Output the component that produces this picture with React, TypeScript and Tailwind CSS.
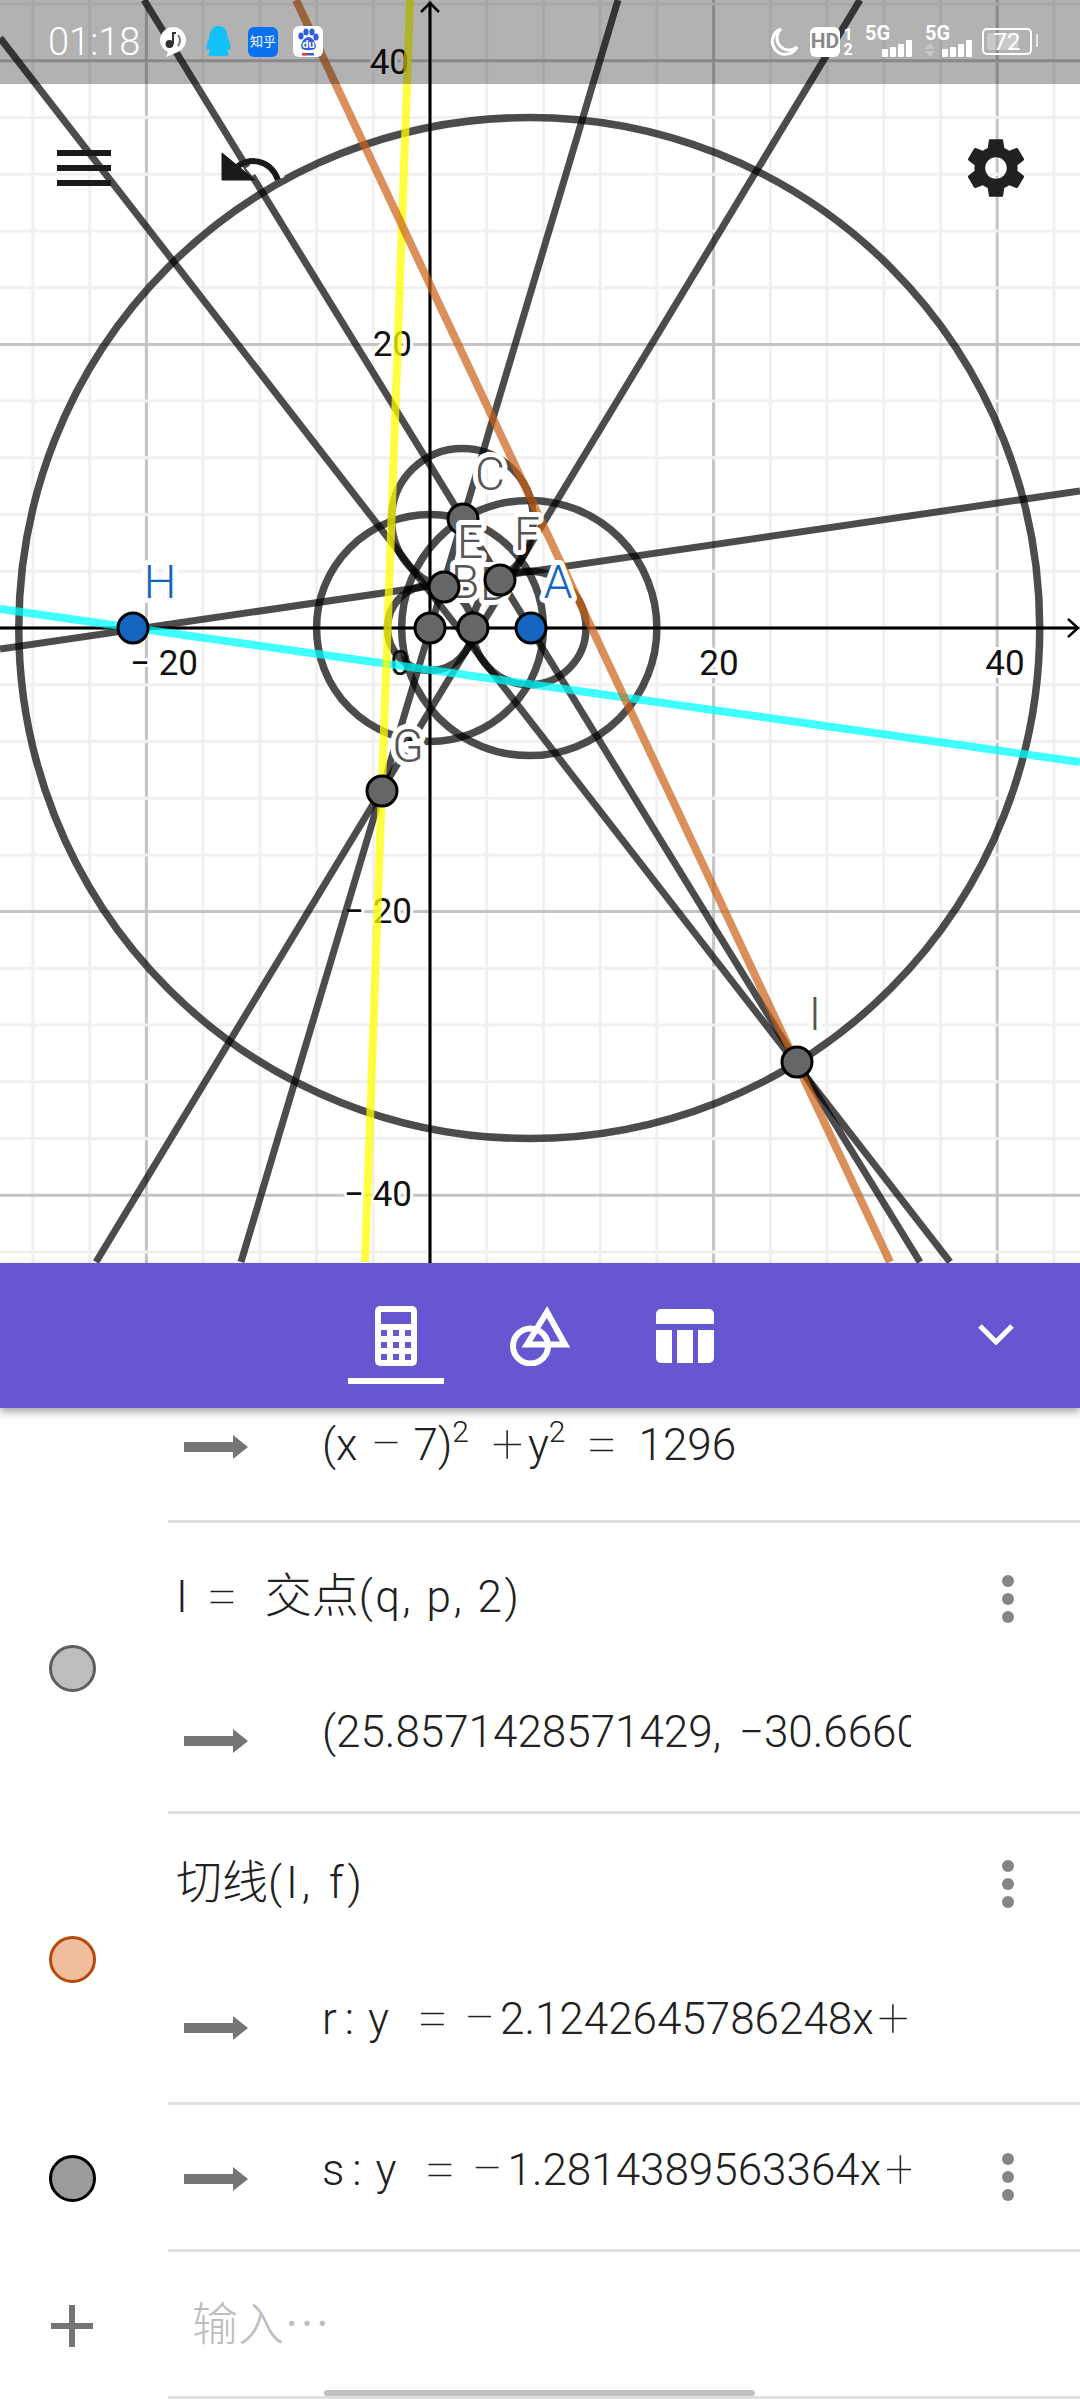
import type { ReactNode } from "react";

const UNIT = 14.18;
const OX = 430;
const OY = 628;
const CANVAS_H = 1263;

const px = (v: number) => OX + v * UNIT;
const py = (v: number) => OY - v * UNIT;

const gridXs = Array.from({ length: 20 }, (_, i) => i * 4 - 32);
const gridYs = Array.from({ length: 24 }, (_, i) => i * 4 - 48);

const circles = [
  { x: 7, y: 0, r: 36 },
  { x: 7, y: 0, r: 9 },
  { x: 0, y: 0, r: 8 },
  { x: 2.2857, y: 7.667, r: 5 },
  { x: 0, y: 0, r: 3 },
  { x: 7, y: 0, r: 4 },
];

const darkLines = [
  [0, 649, 1080, 491],
  [0, 38, 950, 1262],
  [144, 0, 920, 1262],
  [618, 0, 241, 1262],
  [860, 0, 96, 1262],
];

const labels = [
  { t: "D", x: 495, y: 600, c: "#555555" },
  { t: "C", x: 490, y: 490, c: "#555555" },
  { t: "B", x: 465, y: 598, c: "#555555" },
  { t: "F", x: 527, y: 550, c: "#555555" },
  { t: "A", x: 558, y: 598, c: "#1565c0" },
  { t: "G", x: 408, y: 762, c: "#555555" },
  { t: "H", x: 160, y: 598, c: "#1565c0" },
  { t: "I", x: 815, y: 1030, c: "#555555" },
];

const points = [
  { x: 430, y: 628, c: "#666666" },
  { x: 473, y: 628, c: "#666666" },
  { x: 444, y: 587, c: "#666666" },
  { x: 500, y: 580, c: "#666666" },
  { x: 463, y: 519, c: "#666666" },
  { x: 382, y: 791, c: "#666666" },
  { x: 797, y: 1062, c: "#666666" },
  { x: 531, y: 628, c: "#1565c0" },
  { x: 133, y: 628, c: "#1565c0" },
];

const axisLabels = [
  { t: "40", x: 409, y: 74, a: "end" },
  { t: "20", x: 412, y: 356, a: "end" },
  { t: "− 20", x: 412, y: 923, a: "end" },
  { t: "− 40", x: 412, y: 1206, a: "end" },
  { t: "− 20", x: 164, y: 675, a: "middle" },
  { t: "20", x: 719, y: 675, a: "middle" },
  { t: "40", x: 1005, y: 675, a: "middle" },
  { t: "0", x: 400, y: 675, a: "middle" },
];

function PointLabel({ t, x, y, c }: { t: string; x: number; y: number; c: string }) {
  return (
    <text
      x={x}
      y={y}
      textAnchor="middle"
      fontSize="46"
      fontWeight="300"
      fill={c}
      stroke="#ffffff"
      strokeWidth="10"
      paintOrder="stroke"
      strokeLinejoin="round"
    >
      {t}
    </text>
  );
}

function Plot() {
  return (
    <svg width="1080" height={CANVAS_H} className="absolute inset-0">
      {gridXs.map((g) => (
        <line key={g} x1={px(g)} x2={px(g)} y1="0" y2={CANVAS_H} stroke={g % 20 === 0 ? "#c4c4c4" : "#f0f0f0"} strokeWidth="3" />
      ))}
      {gridYs.map((g) => (
        <line key={g} y1={py(g)} y2={py(g)} x1="0" x2="1080" stroke={g % 20 === 0 ? "#c4c4c4" : "#f0f0f0"} strokeWidth="3" />
      ))}
      <line x1={OX} x2={OX} y1="2" y2={CANVAS_H} stroke="#000000" strokeWidth="3" />
      <line x1="0" x2="1078" y1={OY} y2={OY} stroke="#000000" strokeWidth="3" />
      <path d="M421 12 L430 3 L439 12" fill="none" stroke="#000000" strokeWidth="2.5" />
      <path d="M1068 619 L1078 628 L1068 637" fill="none" stroke="#000000" strokeWidth="2.5" />

      {axisLabels.map((l) => (
        <text
          key={l.t + l.x + l.y}
          x={l.x}
          y={l.y}
          textAnchor={l.a as "end" | "middle"}
          fontSize="35"
          fill="#111111"
          stroke="#ffffff"
          strokeWidth="6"
          paintOrder="stroke"
          strokeLinejoin="round"
        >
          {l.t}
        </text>
      ))}

      <g fill="none" stroke="#000000" strokeOpacity="0.7" strokeWidth="7.5">
        {circles.map((c) => (
          <circle key={`${c.x}-${c.r}`} cx={px(c.x)} cy={py(c.y)} r={c.r * UNIT} />
        ))}
      </g>
      <g stroke="#000000" strokeOpacity="0.7" strokeWidth="7">
        {darkLines.map((l) => (
          <line key={l.join()} x1={l[0]} y1={l[1]} x2={l[2]} y2={l[3]} />
        ))}
      </g>
      <line x1="0" y1="609" x2="1080" y2="762" stroke="#00ffff" strokeOpacity="0.75" strokeWidth="8" />
      <line x1="410" y1="0" x2="365" y2="1262" stroke="#ffff00" strokeOpacity="0.75" strokeWidth="8" />
      <line x1="296" y1="0" x2="890" y2="1262" stroke="#cc5f14" strokeOpacity="0.7" strokeWidth="8" />

      {labels.map((l) => (
        <PointLabel key={l.t} {...l} />
      ))}
      {points.map((p) => (
        <circle key={`${p.x}-${p.y}`} cx={p.x} cy={p.y} r="15" fill={p.c} stroke="#000000" strokeWidth="3" />
      ))}
      {/* E sits on top of point C in the reference */}
      <PointLabel t="E" x={470} y={558} c="#555555" />
    </svg>
  );
}

function SignalBars({ arrows }: { arrows?: boolean }) {
  return (
    <div className="relative w-[47px] h-[30px]">
      <span className="absolute left-0 top-[-4px] text-[20px] leading-[20px] font-bold text-white">5G</span>
      {arrows && (
        <svg width="10" height="14" className="absolute left-0 bottom-0" fill="#c8c8c8">
          <path d="M5 0 L10 6 H0 Z M0 8 H10 L5 14 Z" />
        </svg>
      )}
      <div className="absolute right-0 bottom-0 flex items-end gap-[2px]">
        <span className="w-[6px] h-[8px] rounded-[1px] bg-white" />
        <span className="w-[6px] h-[10px] rounded-[1px] bg-white" />
        <span className="w-[6px] h-[13px] rounded-[1px] bg-white" />
        <span className="w-[6px] h-[17px] rounded-[1px] bg-white" />
      </div>
    </div>
  );
}

function StatusBar() {
  return (
    <div className="absolute top-0 left-0 w-full h-[84px] bg-black/30 flex items-center pl-[48px] pr-[48px] pb-[1px]">
      <span className="text-[38px] leading-none font-light text-white w-[111px]">01:18</span>
      <svg width="28" height="32" viewBox="0 0 28 32" className="mt-[1px]">
        <path d="M14 1 a13 13 0 0 1 5 25 L7 31 L9 26 A13 13 0 0 1 14 1 Z" fill="#ffffff" />
        <circle cx="10.5" cy="18" r="4" fill="#333333" />
        <path d="M14 18 V7 L17 7" fill="none" stroke="#333333" strokeWidth="2" />
        <path d="M19 9 Q23 14 19 20" fill="none" stroke="#777777" strokeWidth="2" />
      </svg>
      <svg width="27" height="31" viewBox="0 0 26 31" className="ml-[18px]">
        <path d="M13 0 C20 0 22 6 22 11 C25 17 26 22 24 24 L22 23 C22 27 24 29 22 30 H4 C2 29 4 27 4 23 L2 24 C0 22 1 17 4 11 C4 6 6 0 13 0 Z" fill="#12c2f7" />
      </svg>
      <div className="ml-[16px] w-[30px] h-[30px] rounded-[6px] bg-[#0a72f0] flex items-center justify-center text-[13px] leading-none text-white whitespace-nowrap">
        知乎
      </div>
      <svg width="30" height="31" viewBox="0 0 30 31" className="ml-[15px]">
        <rect width="30" height="31" rx="6" fill="#ffffff" />
        <g fill="#2d5de0">
          <ellipse cx="8" cy="10" rx="2.6" ry="3.6" />
          <ellipse cx="13" cy="6" rx="2.6" ry="3.6" />
          <ellipse cx="19" cy="6" rx="2.6" ry="3.6" />
          <ellipse cx="23" cy="11" rx="2.6" ry="3.6" />
          <path d="M15.5 11 C20 11 24 18 22.5 22 C21 25 10 25 8.5 22 C7 18 11 11 15.5 11 Z" />
        </g>
        <text x="15.5" y="22" textAnchor="middle" fontSize="11" fontWeight="700" fill="#ffffff">du</text>
        <rect x="9" y="27" width="6" height="2.5" fill="#e53935" />
        <rect x="15" y="27" width="6" height="2.5" fill="#2d5de0" />
      </svg>

      <svg width="28" height="28" viewBox="0 0 28 28" className="ml-auto">
        <path d="M11 1 A13 13 0 1 0 27 19 A12 12 0 0 1 11 1 Z" fill="none" stroke="#ffffff" strokeWidth="3" />
      </svg>
      <div className="ml-[12px] w-[30px] h-[30px] rounded-[6px] bg-white flex items-center justify-center text-[21px] leading-none font-bold text-[#8a8a8a]">
        HD
      </div>
      <div className="ml-[2px] w-[12px] flex flex-col items-center text-[16px] leading-[15px] font-bold text-white">
        <span>1</span>
        <span>2</span>
      </div>
      <div className="ml-[11px]">
        <SignalBars />
      </div>
      <div className="ml-[13px]">
        <SignalBars arrows />
      </div>
      <div className="ml-[10px] relative w-[50px] h-[27px] rounded-[5px] border-[2.5px] border-white flex items-center justify-center">
        <span className="absolute left-[3px] top-[3px] bottom-[3px] w-[31px] rounded-[2px] bg-white/30" />
        <span className="relative text-[24px] leading-none text-white">72</span>
        <span className="absolute right-[-8px] top-[4px] w-[2px] h-[13px] bg-white/70" />
      </div>
    </div>
  );
}

function GraphicsPanel() {
  return (
    <section className="relative h-[1263px] w-full overflow-hidden bg-white shrink-0">
      <Plot />
      <StatusBar />
      <div className="absolute left-[57px] top-[150px] w-[54px] flex flex-col gap-[9px]">
        <span className="h-[6px] bg-[#1a1a1a]" />
        <span className="h-[6px] bg-[#1a1a1a]" />
        <span className="h-[6px] bg-[#1a1a1a]" />
      </div>
      <svg width="64" height="30" viewBox="0 0 64 30" className="absolute left-[221px] top-[152px]">
        <path d="M28 20 A20 20 0 0 1 59 27" fill="none" stroke="#ffffff" strokeWidth="10" />
        <path d="M1 1 V28 H34 Z" fill="#1a1a1a" stroke="#1a1a1a" strokeWidth="1" />
        <path d="M15 16 C26 5 49 6 57 28" fill="none" stroke="#1a1a1a" strokeWidth="6" />
      </svg>
      <svg width="72" height="72" viewBox="0 0 24 24" className="absolute left-[960px] top-[132px]" fill="#212121">
        <path d="M19.14 12.94c.04-.3.06-.61.06-.94 0-.32-.02-.64-.07-.94l2.03-1.58c.18-.14.23-.41.12-.61l-1.92-3.32c-.12-.22-.37-.29-.59-.22l-2.39.96c-.5-.38-1.03-.7-1.62-.94l-.36-2.54c-.04-.24-.24-.41-.48-.41h-3.84c-.24 0-.43.17-.47.41l-.36 2.54c-.59.24-1.13.57-1.62.94l-2.39-.96c-.22-.08-.47 0-.59.22L2.74 8.87c-.12.21-.08.47.12.61l2.03 1.58c-.05.3-.09.63-.09.94s.02.64.07.94l-2.03 1.58c-.18.14-.23.41-.12.61l1.92 3.32c.12.22.37.29.59.22l2.39-.96c.5.38 1.03.7 1.62.94l.36 2.54c.05.24.24.41.48.41h3.84c.24 0 .44-.17.47-.41l.36-2.54c.59-.24 1.13-.56 1.62-.94l2.39.96c.22.08.47 0 .59-.22l1.92-3.32c.12-.22.07-.47-.12-.61l-2.01-1.58zM12 15.6c-1.98 0-3.6-1.62-3.6-3.6s1.62-3.6 3.6-3.6 3.6 1.62 3.6 3.6-1.62 3.6-3.6 3.6z" />
      </svg>
    </section>
  );
}

function Toolbar() {
  return (
    <div className="relative z-10 flex items-start h-[145px] shrink-0 pt-[43px] pl-[324px] pr-[66px] bg-[#6557d2] shadow-[0_4px_8px_rgba(0,0,0,0.35)]">
      <button className="w-[144px] flex flex-col items-center">
        <svg width="42" height="60" viewBox="0 0 42 60">
          <rect width="42" height="60" rx="5" fill="#ffffff" />
          <g fill="#6557d2">
            <rect x="6" y="6" width="30" height="12" />
            {[24, 36, 48].map((y) =>
              [6, 18, 30].map((x) => <rect key={`${x}-${y}`} x={x} y={y} width="6" height="6" />),
            )}
          </g>
        </svg>
        <span className="mt-[12px] w-[96px] h-[6px] bg-white" />
      </button>
      <button className="w-[144px] flex flex-col items-center">
        <svg width="60" height="60" viewBox="0 0 60 60" fill="none" stroke="#ffffff">
          <circle cx="20.5" cy="40" r="17.5" strokeWidth="6" />
          <path d="M37 6 L17 38.5 H55 Z" strokeWidth="6" />
        </svg>
      </button>
      <button className="w-[144px] flex flex-col items-center pt-[3px] pl-[2px]">
        <svg width="58" height="54" viewBox="0 0 58 54" fill="#ffffff">
          <path d="M5 0 H53 A5 5 0 0 1 58 5 V15 H0 V5 A5 5 0 0 1 5 0 Z" />
          <path d="M0 21 H16 V54 H5 A5 5 0 0 1 0 49 Z" />
          <rect x="21" y="21" width="16" height="33" />
          <path d="M42 21 H58 V49 A5 5 0 0 1 53 54 H42 Z" />
        </svg>
      </button>
      <svg width="36" height="21" viewBox="0 0 36 21" className="ml-auto mt-[18px]" fill="none" stroke="#ffffff" strokeWidth="5">
        <path d="M2 2 L18 18 L34 2" />
      </svg>
    </div>
  );
}

function Arrow() {
  return (
    <svg width="64" height="24" viewBox="0 0 64 24" className="shrink-0 mt-[4px]" fill="#757575">
      <path d="M0 7 H49 V0 L64 12 L49 24 V17 H0 Z" />
    </svg>
  );
}

function Dots() {
  return (
    <div className="ml-auto mr-[66px] flex flex-col gap-[6px] shrink-0">
      <span className="w-[12px] h-[12px] rounded-full bg-[#858585]" />
      <span className="w-[12px] h-[12px] rounded-full bg-[#858585]" />
      <span className="w-[12px] h-[12px] rounded-full bg-[#858585]" />
    </div>
  );
}

// math operators in the reference are wider and thinner than the text font
function Op({ children, w = "w-[33px]" }: { children: ReactNode; w?: string }) {
  return (
    <span className={`inline-block ${w} text-center text-[56px] leading-[48px] font-thin relative top-[3px]`}>{children}</span>
  );
}

function Output({ children, dots, offset = "mb-[6px]" }: { children: ReactNode; dots?: boolean; offset?: string }) {
  return (
    <div className="flex items-center h-full pl-[16px]">
      <Arrow />
      <div className={`ml-[74px] w-[589px] h-[68px] overflow-hidden whitespace-nowrap text-[44px] leading-[60px] font-light text-[#212121] ${offset}`}>
        {children}
      </div>
      {dots && <Dots />}
    </div>
  );
}

function Marble({ fill, border }: { fill: string; border: string }) {
  return <span className={`w-[47px] h-[47px] rounded-full border-[3px] ${fill} ${border}`} />;
}

function Row({ marble, className, children }: { marble?: ReactNode; className: string; children: ReactNode }) {
  return (
    <div className={`flex ${className}`}>
      <div className="w-[168px] shrink-0 flex items-center justify-center pr-[24px]">{marble}</div>
      <div className="flex-1 min-w-0 border-b-[3px] border-[#e0e0e0] flex flex-col">{children}</div>
    </div>
  );
}

function Sup({ children }: { children: ReactNode }) {
  return <span className="text-[30px] leading-none relative top-[-18px]">{children}</span>;
}

function AlgebraList() {
  return (
    <div className="flex-1 overflow-hidden bg-white">
      <Row className="h-[115px]">
        <div className="h-[74px]">
          <Output offset="mt-[8px]">
            (x<span className="mx-[13px]"><Op w="w-[30px]">−</Op></span>7)
            <Sup>2</Sup>
            <span className="ml-[22px] mr-[4px]"><Op>+</Op></span>y<Sup>2</Sup>
            <span className="mx-[20px]"><Op>=</Op></span>1296
          </Output>
        </div>
      </Row>

      <Row className="h-[291px]" marble={<Marble fill="bg-[#bdbdbd]" border="border-[#5e5e5e]" />}>
        <div className="h-[152px] flex items-center pl-[8px]">
          <span className="text-[44px] leading-[60px] font-light text-[#212121] whitespace-pre pb-[5px]">
            I<span className="ml-[18px] mr-[26px]"><Op>=</Op></span>
            <span className="text-[47px]">交点</span>
            <span className="tracking-[2.5px]">(q, p, 2)</span>
          </span>
          <Dots />
        </div>
        <div className="h-[128px]">
          <Output>
            (25.8571428571429,<span className="ml-[7px]"> −30.66603</span>
          </Output>
        </div>
      </Row>

      <Row className="h-[291px]" marble={<Marble fill="bg-[#f0bd9f]" border="border-[#b34a0a]" />}>
        <div className="h-[140px] flex items-center pl-[8px]">
          <span className="text-[44px] leading-[60px] font-light text-[#212121] whitespace-pre pb-[4px]">
            <span className="text-[46px]">切线</span>
            <span className="tracking-[4px]">(I, f)</span>
          </span>
          <Dots />
        </div>
        <div className="h-[144px]">
          <Output>
            r<span className="ml-[8px] mr-[14px]">:</span>y<span className="ml-[27px] mr-[15px]"><Op>=</Op></span>
            <span className="mr-[6px]"><Op w="w-[30px]">−</Op></span>2.1242645786248x<span className="ml-[3px]"><Op>+</Op></span>
          </Output>
        </div>
      </Row>

      <Row className="h-[147px]" marble={<Marble fill="bg-[#9b9b9b]" border="border-black" />}>
        <div className="h-[144px]">
          <Output dots>
            s<span className="ml-[8px] mr-[14px]">:</span>y<span className="ml-[27px] mr-[15px]"><Op>=</Op></span>
            <span className="mr-[6px]"><Op w="w-[30px]">−</Op></span>1.2814389563364x<span className="ml-[3px]"><Op>+</Op></span>
          </Output>
        </div>
      </Row>

      <Row
        className="h-[147px]"
        marble={
          <svg width="42" height="42" viewBox="0 0 42 42" fill="#757575">
            <rect x="18" width="6" height="42" />
            <rect y="18" width="42" height="6" />
          </svg>
        }
      >
        <div className="h-[144px] flex items-center pl-[24px] text-[46px] font-light text-[#bdbdbd]">输入⋯</div>
      </Row>
    </div>
  );
}

export default function App() {
  return (
    <div className="relative w-[1080px] h-[2400px] overflow-hidden bg-white flex flex-col font-[family-name:Roboto,'Noto_Sans_CJK_SC',sans-serif]">
      <GraphicsPanel />
      <Toolbar />
      <AlgebraList />
      <span className="absolute left-[324px] bottom-[4px] w-[431px] h-[6px] rounded-full bg-[#c0c0c0]" />
    </div>
  );
}
